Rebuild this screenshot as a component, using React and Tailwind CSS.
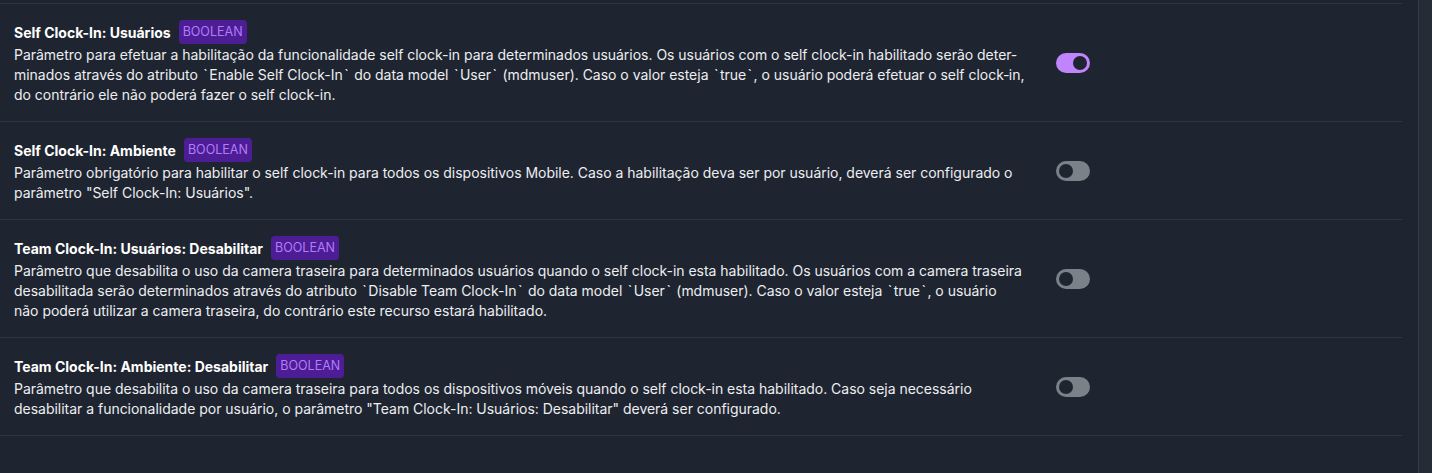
import React from "react";

const rows = [
  {
    title: "Self Clock-In: Usuários",
    on: true,
    desc: "Parâmetro para efetuar a habilitação da funcionalidade self clock-in para determinados usuários. Os usuários com o self clock-in habilitado serão deter\u00ADminados através do atributo `Enable Self Clock-In` do data model `User` (mdmuser). Caso o valor esteja `true`, o usuário poderá efetuar o self clock\u2011in, do contrário ele não poderá fazer o self clock-in.",
  },
  {
    title: "Self Clock-In: Ambiente",
    on: false,
    desc: "Parâmetro obrigatório para habilitar o self clock-in para todos os dispositivos Mobile. Caso a habilitação deva ser por usuário, deverá ser configurado o parâmetro \"Self Clock-In: Usuários\".",
  },
  {
    title: "Team Clock-In: Usuários: Desabilitar",
    on: false,
    desc: "Parâmetro que desabilita o uso da camera traseira para determinados usuários quando o self clock-in esta habilitado. Os usuários com a camera traseira desabilitada serão determinados através do atributo `Disable Team Clock-In` do data model `User` (mdmuser). Caso o valor esteja `true`, o usuário\nnão poderá utilizar a camera traseira, do contrário este recurso estará habilitado.",
  },
  {
    title: "Team Clock-In: Ambiente: Desabilitar",
    on: false,
    desc: "Parâmetro que desabilita o uso da camera traseira para todos os dispositivos móveis quando o self clock-in esta habilitado. Caso seja necessário desabilitar a funcionalidade por usuário, o parâmetro \"Team Clock-In: Usuários: Desabilitar\" deverá ser configurado.",
  },
];

function Desc({ text }) {
  const out = [];
  text.split("\n").forEach((line, li) => {
    if (li > 0) out.push(<br key={"br" + li} />);
    line.split("`").forEach((p, i) => {
      if (i > 0)
        out.push(
          <span key={`b${li}-${i}`} className="mx-[1.5px]">
            `
          </span>
        );
      out.push(<React.Fragment key={`t${li}-${i}`}>{p}</React.Fragment>);
    });
  });
  return <p className="mt-px text-[14px] leading-5 tracking-[-0.02px] text-[#eceef0]">{out}</p>;
}

function Toggle({ on }) {
  return (
    <div
      className={`flex h-5 w-[34px] shrink-0 items-center rounded-full px-[3px] ${
        on ? "justify-end bg-[#c084fc]" : "justify-start bg-[#7b8188]"
      }`}
    >
      <div className="h-[14px] w-[14px] rounded-full bg-[#1f2530]" />
    </div>
  );
}

export default function App() {
  return (
    <div
      className="flex h-[473px] w-[1432px] bg-[#1f2530]"
      style={{ fontFamily: "Inter, 'Noto Sans', sans-serif" }}
    >
      <div className="w-[1418px] pr-4 pt-[3px]">
        <div className="border-t border-[#30363f]">
          {rows.map((r, i) => (
            <div key={i} className="flex items-center border-b border-[#30363f] py-4 pl-[14px]">
              <div className="w-[1011px]">
                <div className="flex h-6 items-center">
                  <span className="text-[14px] font-bold text-white">{r.title}</span>
                  <span className="ml-2 flex h-6 items-center rounded bg-[#4c1d95] px-1 text-[12.5px] text-[#b27cf7]">
                    BOOLEAN
                  </span>
                </div>
                <Desc text={r.desc} />
              </div>
              <div className="ml-[31px]">
                <Toggle on={r.on} />
              </div>
            </div>
          ))}
        </div>
      </div>
      <div className="w-[14px] border-l border-[#363c45] bg-[#262c35]" />
    </div>
  );
}
